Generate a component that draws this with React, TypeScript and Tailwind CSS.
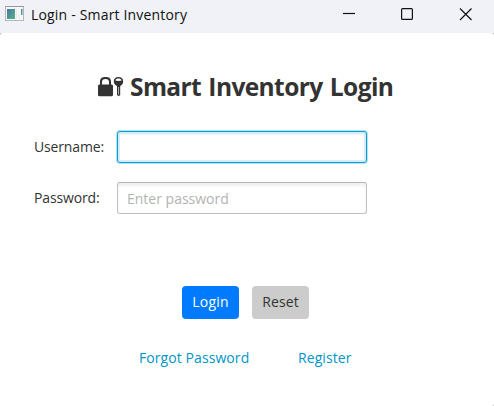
import React from "react";

function AppIcon() {
  return (
    <svg width="20" height="16" viewBox="0 0 20 16" className="mr-[6px] block" aria-hidden="true">
      <defs>
        <linearGradient id="pane" x1="0" y1="0" x2="1" y2="1">
          <stop offset="0" stopColor="#4577a0" />
          <stop offset="1" stopColor="#55b58b" />
        </linearGradient>
      </defs>
      <rect x="0.5" y="0.5" width="18" height="14" fill="#f7f7f7" stroke="#b4b6b9" />
      <path d="M0 0.5h19" stroke="#92999f" />
      <rect x="2" y="3" width="8" height="10" fill="url(#pane)" />
      <path d="M11.5 3v10M14.5 8v5" stroke="#e9eaea" />
      <rect x="16" y="3" width="1.5" height="6" fill="url(#pane)" />
    </svg>
  );
}

function LockKey() {
  return (
    <svg width="26" height="22" viewBox="0 0 26 22" fill="#333333" className="mr-[6px] block" aria-hidden="true">
      <path
        fillRule="evenodd"
        d="M2 8.500V5.500C2 2.300 4 1 7.500 1S13 2.300 13 5.500V8.500c1.300 0 2 .5 2 1.500V19c0 .7-.5 1.200-1.500 1.200H1.500C.5 20.200 0 19.700 0 19V10c0-1 .7-1.500 2-1.500zM4 8.500h7V6c0-2-1.200-3-3.500-3S4 4 4 6z"
      />
      <path
        fillRule="evenodd"
        d="M20.500 1c3 0 4.700 1.600 4.700 4.300 0 2.400-1.300 4-3 4.700V19L20.700 20.300 19 19V10c-1.800-.7-3.200-2.300-3.200-4.700C15.800 2.600 17.500 1 20.500 1zM17.300 4.500c1.800.6 4.700.6 6.400 0C23.100 3.100 22 2.500 20.500 2.500S17.900 3.100 17.300 4.500zM20.200 11v7.500h.6V11z"
      />
    </svg>
  );
}

function TitleBar() {
  return (
    <header className="flex h-[33px] items-start bg-[#f0f2f8] pl-[5px] pt-[6px]">
      <AppIcon />
      <span className="w-[304px] whitespace-nowrap text-[14px] leading-[18px] tracking-[0.18px] text-[#111]">
        Login - Smart Inventory
      </span>
      <svg width="140" height="16" viewBox="0 0 140 16" fill="none" stroke="#111" strokeWidth="1.2" className="block">
        <path d="M8 7.500h12" />
        <rect x="66.600" y="2.600" width="10.800" height="10.800" rx="1" />
        <path d="M125 2.500l11.500 11.500M136.500 2.500L125 14" />
      </svg>
    </header>
  );
}

export default function App() {
  return (
    <div className="h-[406px] w-[494px] overflow-hidden bg-[#b9bec6] font-['Open_Sans','Noto_Sans',sans-serif] text-[14px] leading-[20px] text-[#333]">
      <TitleBar />
      <main className="h-[373px] rounded-t-[3px] rounded-br-[2px] bg-white pt-[37px]">
        <h1 className="flex h-[34px] items-center pl-[98px]">
          <LockKey />
          <span className="whitespace-nowrap text-[24.5px] font-bold leading-[34px] tracking-[-0.6px] [word-spacing:1.5px]">
            Smart Inventory Login
          </span>
        </h1>
        <form className="mt-[27px] flex flex-col gap-[19px] pl-[34px]" onSubmit={(e) => e.preventDefault()}>
          <label className="flex h-8 items-center">
            <span className="w-[83px] whitespace-nowrap tracking-[-0.15px]">Username:</span>
            <input
              type="text"
              className="h-8 w-[250px] rounded-[3px] border border-[#039ed3] bg-white px-[10px] shadow-[0_0_0_1px_#b9e2f1,inset_0_0_0_2px_#d5edf6,inset_0_3px_2px_#edf6fa] outline-none"
            />
          </label>
          <label className="flex h-8 items-center">
            <span className="w-[83px] whitespace-nowrap tracking-[-0.15px]">Password:</span>
            <input
              type="password"
              placeholder="Enter password"
              className="h-8 w-[250px] rounded-[3px] border border-[#c0c0c0] border-t-[#b4b4b4] bg-white px-[9px] shadow-[inset_0_3px_3px_#f0f0f0] outline-none placeholder:text-[#b3b3b3]"
            />
          </label>
        </form>
        <div className="mt-[72px] flex gap-[13px] pl-[182px]">
          <button className="h-[33px] w-[57px] rounded-[4px] bg-[#007bff] pb-[2px] tracking-[0.2px] text-white">Login</button>
          <button className="h-[33px] w-[57px] rounded-[4px] bg-[#cccccc] pb-[2px] tracking-[0.1px] text-[#333]">Reset</button>
        </div>
        <nav className="mt-[29px] flex whitespace-nowrap pl-[139px] tracking-[0.08px] text-[#0096c9]">
          <a className="w-[159px]">Forgot Password</a>
          <a>Register</a>
        </nav>
      </main>
    </div>
  );
}
